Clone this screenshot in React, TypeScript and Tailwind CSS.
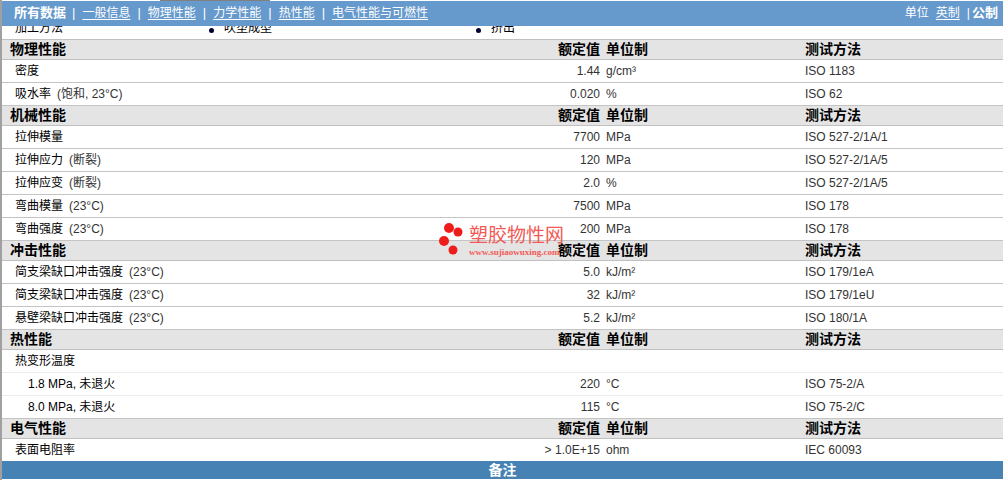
const font = "font-['Liberation_Sans','Noto_Sans_CJK_SC',sans-serif]";

type Row = { name: React.ReactNode; value?: string; unit?: string; method?: string; light?: boolean };
type Section = { title: string; rows: Row[] };

const note = (text: string) => <span className="ml-[6px] text-[#333]">{text}</span>;

const sections: Section[] = [
  {
    title: "物理性能",
    rows: [
      { name: "密度", value: "1.44", unit: "g/cm³", method: "ISO 1183" },
      { name: <>吸水率{note("(饱和, 23°C)")}</>, value: "0.020", unit: "%", method: "ISO 62" },
    ],
  },
  {
    title: "机械性能",
    rows: [
      { name: "拉伸模量", value: "7700", unit: "MPa", method: "ISO 527-2/1A/1" },
      { name: <>拉伸应力{note("(断裂)")}</>, value: "120", unit: "MPa", method: "ISO 527-2/1A/5" },
      { name: <>拉伸应变{note("(断裂)")}</>, value: "2.0", unit: "%", method: "ISO 527-2/1A/5" },
      { name: <>弯曲模量{note("(23°C)")}</>, value: "7500", unit: "MPa", method: "ISO 178" },
      { name: <>弯曲强度{note("(23°C)")}</>, value: "200", unit: "MPa", method: "ISO 178" },
    ],
  },
  {
    title: "冲击性能",
    rows: [
      { name: <>简支梁缺口冲击强度{note("(23°C)")}</>, value: "5.0", unit: "kJ/m²", method: "ISO 179/1eA" },
      { name: <>简支梁缺口冲击强度{note("(23°C)")}</>, value: "32", unit: "kJ/m²", method: "ISO 179/1eU" },
      { name: <>悬壁梁缺口冲击强度{note("(23°C)")}</>, value: "5.2", unit: "kJ/m²", method: "ISO 180/1A" },
    ],
  },
  {
    title: "热性能",
    rows: [
      { name: "热变形温度", light: true },
      { name: <span className="ml-[13px]">1.8 MPa, 未退火</span>, value: "220", unit: "°C", method: "ISO 75-2/A", light: true },
      { name: <span className="ml-[13px]">8.0 MPa, 未退火</span>, value: "115", unit: "°C", method: "ISO 75-2/C" },
    ],
  },
  {
    title: "电气性能",
    rows: [{ name: "表面电阻率", value: "> 1.0E+15", unit: "ohm", method: "IEC 60093" }],
  },
];

const tabs = ["一般信息", "物理性能", "力学性能", "热性能", "电气性能与可燃性"];

const columns = "grid grid-cols-[598px_205px_1fr]";

function SectionHeader({ title }: { title: string }) {
  return (
    <div className={`${columns} h-[20px] items-center border-b border-[#c0c0c0] bg-[#e4e4e4] pb-[1px] text-[14px] font-bold leading-[16px] text-black`}>
      <div className="flex justify-between pl-[8px]">
        <span>{title}</span>
        <span>额定值</span>
      </div>
      <span className="pl-[6px]">单位制</span>
      <span>测试方法</span>
    </div>
  );
}

function DataRow({ row, last }: { row: Row; last: boolean }) {
  return (
    <div className={`${columns} h-[23px] items-center border-b text-[12px] ${row.light ? "border-[#ececec]" : "border-[#c4c4c4]"} ${last ? "mb-[-1px]" : ""}`}>
      <div className="flex justify-between pl-[13px]">
        <span className="text-black">{row.name}</span>
        <span className="text-[#333]">{row.value}</span>
      </div>
      <span className="pl-[6px] text-[#333]">{row.unit}</span>
      <span className="text-[#333]">{row.method}</span>
    </div>
  );
}

function Watermark() {
  return (
    <div className="absolute left-[436px] top-[222px] flex">
      <svg width="31" height="36" viewBox="0 0 31 36" className="shrink-0">
        <circle cx="11" cy="6" r="5" fill="#ef1c1c" />
        <circle cx="20" cy="10" r="4.5" fill="#ef1c1c" />
        <circle cx="6" cy="19" r="5" fill="#ef1c1c" />
        <circle cx="15" cy="28" r="4.5" fill="#ef1c1c" />
      </svg>
      <div className="flex flex-col pt-[3px] text-[#f25a56]">
        <span className="text-[19px] leading-[22px]">塑胶物性网</span>
        <span className="font-['Liberation_Serif',serif] text-[9px] font-bold leading-[10px]">www.sujiaowuxing.com</span>
      </div>
    </div>
  );
}

export default function App() {
  return (
    <div className={`${font} relative h-[480px] w-[1003px] overflow-hidden border-l-2 border-[#a0a0a0] bg-white`}>
      <div className="ml-[158px] h-[1px] w-[110px] bg-[#808080]" />
      <div className="flex h-[25px] items-center justify-between bg-[#6699cc] pb-[2px] pl-[12px] pr-[5px] text-[12px] text-white">
        <div className="flex items-center">
          <span className="mr-[-1px] text-[13px] font-bold">所有数据</span>
          {tabs.map((t) => (
            <span key={t} className="flex items-center">
              <span className="mx-[7px] text-[13px]">|</span>
              <a className="underline underline-offset-2">{t}</a>
            </span>
          ))}
        </div>
        <div className="flex items-center">
          <span>单位</span>
          <a className="ml-[7px] underline underline-offset-2">英制</a>
          <span className="ml-[7px] mr-[2px]">|</span>
          <span className="text-[13px] font-bold">公制</span>
        </div>
      </div>

      <div className="relative h-[14px] overflow-hidden border-b border-[#c0c0c0] text-[12px] text-black">
        <div className="-mt-[7px] grid grid-cols-[194px_267px_1fr] items-center pl-[13px]">
          <span>加工方法</span>
          <span className="flex items-center gap-[10px]">
            <i className="mt-[4px] h-[5px] w-[5px] rounded-full bg-[#000030]" />
            吹塑成型
          </span>
          <span className="flex items-center gap-[10px]">
            <i className="mt-[4px] h-[5px] w-[5px] rounded-full bg-[#000030]" />
            挤出
          </span>
        </div>
      </div>

      {sections.map((s, si) => (
        <div key={s.title}>
          <SectionHeader title={s.title} />
          {s.rows.map((r, i) => (
            <DataRow key={i} row={r} last={si === sections.length - 1} />
          ))}
        </div>
      ))}

      <div className="relative h-[18px] bg-[#4682b4] text-center text-[14px] font-bold leading-[18px] text-white">备注</div>
      <Watermark />
    </div>
  );
}
